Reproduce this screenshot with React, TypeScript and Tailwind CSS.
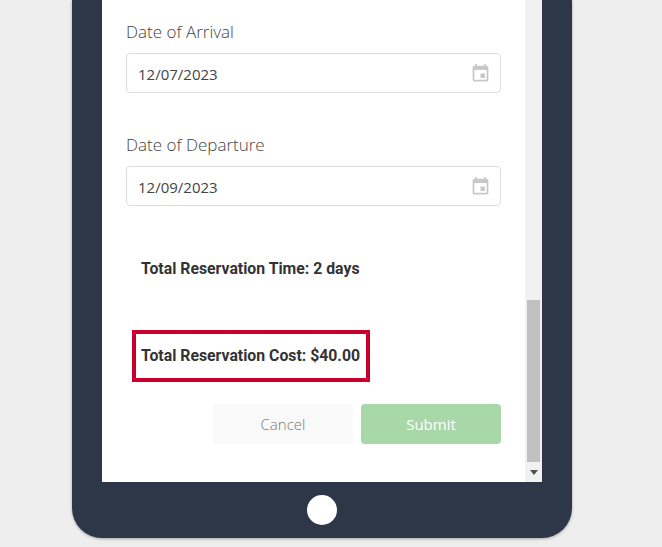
const DateField = ({ label, value }: { label: string; value: string }) => (
  <div className="h-[113px]">
    <label className="block h-[53px] pt-[19px] text-[17px] leading-[26px] font-light text-[#444]">{label}</label>
    <div className="flex h-10 items-center justify-between rounded border border-[#ddd] pl-[11px] pr-[9px] text-[15px] text-[#444]">
      <span className="pt-[2px]">{value}</span>
      <svg width="21" height="21" viewBox="0 0 24 24" fill="#c8c8c8">
        <path d="M17 12h-5v5h5v-5zM16 1v2H8V1H6v2H5c-1.11 0-1.99.9-1.99 2L3 19c0 1.1.89 2 2 2h14c1.1 0 2-.9 2-2V5c0-1.1-.9-2-2-2h-1V1h-2zm3 18H5V8h14v11z" />
      </svg>
    </div>
  </div>
);

export default function App() {
  return (
    <div className="h-[547px] w-[662px] overflow-hidden bg-[#eeeeee] pl-[72px] font-['Open_Sans',sans-serif]">
      <div className="flex h-[538px] w-[500px] flex-col rounded-b-[30px] bg-[#2d3748] px-[30px] shadow-[0_1px_3px_rgba(0,0,0,0.3)]">
        <div className="flex h-[482px] bg-white">
          <div className="flex-1 px-6">
            <DateField label="Date of Arrival" value="12/07/2023" />
            <DateField label="Date of Departure" value="12/09/2023" />
            <div className="flex h-[104px] items-center pb-[18px] pl-[15px] font-['Roboto',sans-serif] text-[15.8px] font-bold text-[#333]">
              Total Reservation Time: 2 days
            </div>
            <div className="ml-[6px] flex h-[52px] w-[238px] items-center border-4 border-[#c8002d] pl-[5px] font-['Roboto',sans-serif] text-[15.8px] font-bold text-[#333]">
              Total Reservation Cost: $40.00
            </div>
            <div className="mt-[22px] flex justify-end gap-2">
              <button className="h-10 w-[140px] rounded bg-[#f9f9f9] text-[15px] font-light text-[#777]">Cancel</button>
              <button className="h-10 w-[140px] rounded bg-[#a8d8a8] text-[15px] font-medium text-white">Submit</button>
            </div>
          </div>
          <div className="flex w-[17px] flex-col items-center justify-end bg-[#f1f1f1]">
            <div className="h-[162px] w-[13px] bg-[#c1c1c1]" />
            <div className="flex h-5 items-center justify-center">
              <svg width="8" height="5" viewBox="0 0 8 5" fill="#505050"><path d="M0 0h8L4 5z" /></svg>
            </div>
          </div>
        </div>
        <div className="flex flex-1 items-center justify-center">
          <div className="h-[30px] w-[30px] rounded-full bg-white" />
        </div>
      </div>
    </div>
  );
}
